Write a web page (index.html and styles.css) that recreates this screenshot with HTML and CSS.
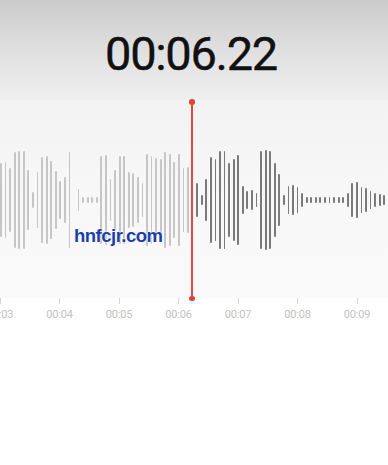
FILE: index.html
```html
<!DOCTYPE html>
<html>
<head>
<meta charset="utf-8">
<link rel="stylesheet" href="styles.css">
</head>
<body>
<div class="screen">
  <header class="head">
    <div class="timer">00:06.22</div>
  </header>
  <section class="wave">
    <div class="bars">
      <i class="b" style="height:74px"></i><i class="b" style="height:76px"></i><i class="b" style="height:64px"></i><i class="b" style="height:96px"></i><i class="b" style="height:98px"></i><i class="b" style="height:98px"></i><i class="b" style="height:60px"></i><i class="b" style="height:16px"></i><i class="b" style="height:56px"></i><i class="b" style="height:86px"></i><i class="b" style="height:88px"></i><i class="b" style="height:78px"></i><i class="b" style="height:58px"></i><i class="b" style="height:38px"></i><i class="b" style="height:46px"></i><i class="b" style="height:96px"></i><i class="b" style="height:0px"></i><i class="b" style="height:22px"></i><i class="b" style="height:6px"></i><i class="b" style="height:6px"></i><i class="b" style="height:6px"></i><i class="b" style="height:6px"></i><i class="b" style="height:88px"></i><i class="b" style="height:90px"></i><i class="b" style="height:42px"></i><i class="b" style="height:60px"></i><i class="b" style="height:88px"></i><i class="b" style="height:88px"></i><i class="b" style="height:56px"></i><i class="b" style="height:54px"></i><i class="b" style="height:46px"></i><i class="b" style="height:34px"></i><i class="b" style="height:92px"></i><i class="b" style="height:88px"></i><i class="b" style="height:84px"></i><i class="b" style="height:82px"></i><i class="b" style="height:96px"></i><i class="b" style="height:92px"></i><i class="b" style="height:76px"></i><i class="b" style="height:92px"></i><i class="b" style="height:64px"></i><i class="b" style="height:66px"></i><i class="b" style="height:0px"></i><i class="b d" style="height:34px"></i><i class="b d" style="height:10px"></i><i class="b d" style="height:42px"></i><i class="b d" style="height:86px"></i><i class="b d" style="height:82px"></i><i class="b d" style="height:98px"></i><i class="b d" style="height:98px"></i><i class="b d" style="height:74px"></i><i class="b d" style="height:82px"></i><i class="b d" style="height:90px"></i><i class="b d" style="height:28px"></i><i class="b d" style="height:18px"></i><i class="b d" style="height:20px"></i><i class="b d" style="height:14px"></i><i class="b d" style="height:98px"></i><i class="b d" style="height:100px"></i><i class="b d" style="height:98px"></i><i class="b d" style="height:74px"></i><i class="b d" style="height:52px"></i><i class="b d" style="height:10px"></i><i class="b d" style="height:28px"></i><i class="b d" style="height:30px"></i><i class="b d" style="height:26px"></i><i class="b d" style="height:14px"></i><i class="b d" style="height:6px"></i><i class="b d" style="height:6px"></i><i class="b d" style="height:6px"></i><i class="b d" style="height:6px"></i><i class="b d" style="height:6px"></i><i class="b d" style="height:6px"></i><i class="b d" style="height:6px"></i><i class="b d" style="height:6px"></i><i class="b d" style="height:6px"></i><i class="b d" style="height:14px"></i><i class="b d" style="height:34px"></i><i class="b d" style="height:36px"></i><i class="b d" style="height:26px"></i><i class="b d" style="height:24px"></i><i class="b d" style="height:18px"></i><i class="b d" style="height:14px"></i><i class="b d" style="height:12px"></i><i class="b d" style="height:10px"></i><i class="b d" style="height:8px"></i>
    </div>
    <div class="playhead"><span class="dot top"></span><span class="dot bottom"></span></div>
    <div class="watermark">hnfcjr.com</div>
  </section>
  <div class="ruler">
    <div class="mark"><span class="tick"></span><span class="lbl">00:03</span></div>
    <div class="mark"><span class="tick"></span><span class="lbl">00:04</span></div>
    <div class="mark"><span class="tick"></span><span class="lbl">00:05</span></div>
    <div class="mark"><span class="tick"></span><span class="lbl">00:06</span></div>
    <div class="mark"><span class="tick"></span><span class="lbl">00:07</span></div>
    <div class="mark"><span class="tick"></span><span class="lbl">00:08</span></div>
    <div class="mark"><span class="tick"></span><span class="lbl">00:09</span></div>
  </div>
</div>
</body>
</html>
```
FILE: styles.css
```css
html, body {
  margin: 0;
  padding: 0;
  background: #ffffff;
}
.screen {
  width: 388px;
  height: 465px;
  overflow: hidden;
  font-family: Roboto, "Liberation Sans", sans-serif;
  background: #ffffff;
}
.head {
  height: 100px;
  background: linear-gradient(to bottom, #cacaca 0%, #dedede 45%, #efefef 100%);
  display: flex;
  justify-content: center;
  align-items: flex-start;
}
.timer {
  margin-top: 26px;
  margin-left: -6px;
  font-size: 47px;
  font-weight: 400;
  letter-spacing: -1.3px;
  color: #111111;
  line-height: 56px;
  -webkit-text-stroke: 0.4px #111111;
}
.wave {
  position: relative;
  height: 198px;
  background: linear-gradient(to bottom, #f2f2f2 0%, #f7f7f7 40%, #f9f9f9 100%);
}
.bars {
  height: 198px;
  box-sizing: border-box;
  padding-top: 2px;
  padding-left: 0.1px;
  display: flex;
  align-items: center;
  gap: 2.77px;
}
.b {
  display: block;
  flex: 0 0 1.8px;
  width: 1.8px;
  background: #c6c6c6;
  border-radius: 1px;
}
.b.d {
  background: #7a7a7a;
}
.playhead {
  position: absolute;
  left: 191.3px;
  top: 1px;
  bottom: -1px;
  width: 1.5px;
  background: #df4a43;
}
.dot {
  position: absolute;
  left: -2px;
  width: 5.5px;
  height: 5.5px;
  border-radius: 50%;
  background: #e0423a;
}
.dot.top { top: -2px; }
.dot.bottom { bottom: -2px; }
.watermark {
  position: absolute;
  left: 74px;
  top: 125px;
  font-family: "Liberation Sans", Arial, sans-serif;
  font-size: 18.5px;
  font-weight: 700;
  letter-spacing: -0.5px;
  color: #1b3faa;
  text-shadow: 0 0 2px #ffffff, 0 0 2px #ffffff;
}
.ruler {
  display: flex;
  margin-left: -29.75px;
  background: #ffffff;
}
.mark {
  flex: 0 0 59.5px;
  display: flex;
  flex-direction: column;
  align-items: center;
}
.tick {
  display: block;
  width: 1px;
  height: 6px;
  background: #d6d6d6;
}
.lbl {
  margin-top: 4px;
  font-size: 11px;
  color: #c2c2c2;
  letter-spacing: -0.2px;
}
```
